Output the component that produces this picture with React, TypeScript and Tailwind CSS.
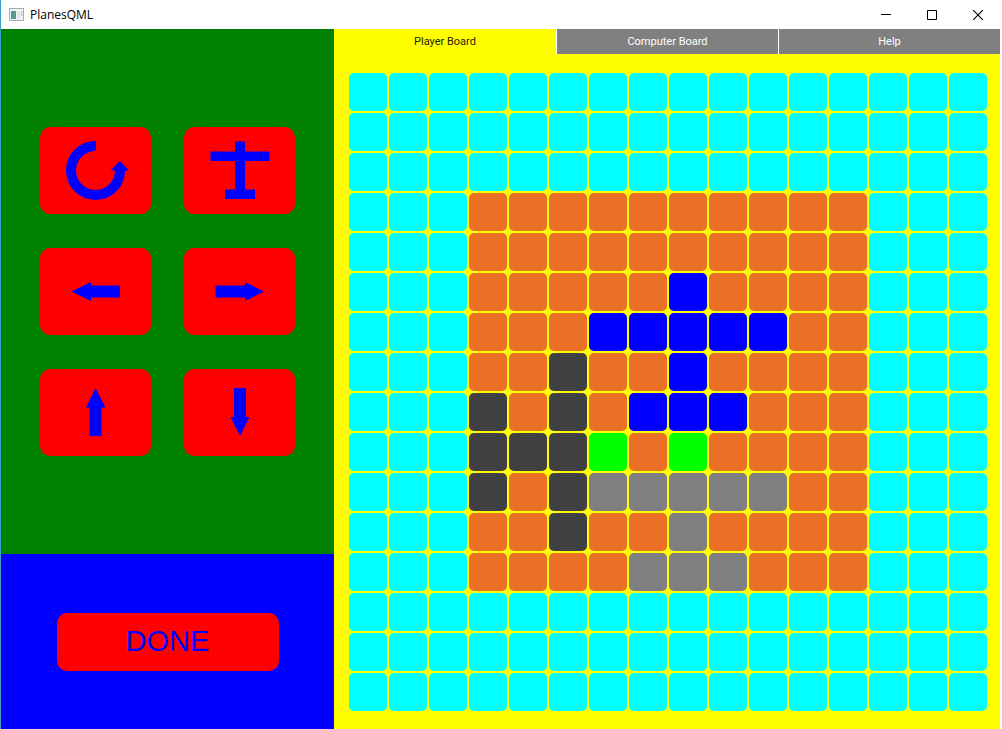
import { useState, type ReactNode } from "react";

const BOARD = [
  "................",
  "................",
  "................",
  "...oooooooooo...",
  "...oooooooooo...",
  "...oooooboooo...",
  "...ooobbbbboo...",
  "...ookooboooo...",
  "...kokobbbooo...",
  "...kkkgogoooo...",
  "...kokaaaaaoo...",
  "...ookooaoooo...",
  "...ooooaaaooo...",
  "................",
  "................",
  "................",
];

const CELL_COLORS: Record<string, string> = {
  ".": "bg-[#00ffff]",
  o: "bg-[#ea7025]",
  b: "bg-[#0000ff]",
  k: "bg-[#404040]",
  g: "bg-[#00ff00]",
  a: "bg-[#808080]",
};

const TABS = ["Player Board", "Computer Board", "Help"];

function Glyph({ children }: { children: ReactNode }) {
  return (
    <svg viewBox="0 0 111 87" className="h-[87px] w-[111px]" fill="#0000ff" aria-hidden="true">
      {children}
    </svg>
  );
}

const CONTROLS: { label: string; glyph: ReactNode }[] = [
  {
    label: "Rotate",
    glyph: (
      <>
        <path d="M56 19A24.500 24.500 0 1 0 80 43" fill="none" stroke="#0000ff" strokeWidth="10" />
        <path d="M70.500 43.500L80 34L89 43.500Z" />
      </>
    ),
  },
  { label: "Plane", glyph: <path d="M51 14.500h10v10h24.500v9.500H61v28.500h10v9.500H41v-9.500h10V34H26.500v-9.500H51Z" /> },
  { label: "Move left", glyph: <path d="M31.500 43.500L51 34v3.500h29v12H51V53Z" /> },
  { label: "Move right", glyph: <path d="M80 43.500L61 34v3.500H31.500v12H61V53Z" /> },
  { label: "Move up", glyph: <path d="M55.500 19L65.500 38.500H61.500v28.500h-12V38.500H46Z" /> },
  { label: "Move down", glyph: <path d="M56 67L65.500 48H62V19H50V48H46.500Z" /> },
];

function TitleBar() {
  return (
    <header className="-mr-px flex h-[29px] shrink-0 items-center bg-white text-black">
      <svg viewBox="0 0 15 13" className="ml-2 h-[13px] w-[15px]" aria-hidden="true">
        <defs>
          <linearGradient id="pane" x1="0" y1="0" x2="1" y2="1">
            <stop offset="0" stopColor="#4f8fb0" />
            <stop offset="1" stopColor="#58a878" />
          </linearGradient>
        </defs>
        <path d="M0 0h15v13H0Z" fill="#a9adb2" />
        <path d="M1 1h13v11H1Z" fill="#f4f4f4" />
        <path d="M2 3h5v8H2Z" fill="url(#pane)" />
        <path d="M8 3h3v8H8Z" fill="#e3e6e8" />
        <path d="M12 3h1.500v5H12Z" fill="#c8ccd0" />
      </svg>
      <h1 className="ml-1.5 flex-1 font-['Open_Sans','Noto_Sans',sans-serif] text-xs">PlanesQML</h1>
      <div className="flex h-full">
        <button type="button" aria-label="Minimize" className="grid w-[46px] place-items-center">
          <svg viewBox="0 0 10 10" className="size-[10px]" aria-hidden="true">
            <path d="M0 4h10v1H0Z" />
          </svg>
        </button>
        <button type="button" aria-label="Maximize" className="grid w-[46px] place-items-center">
          <svg viewBox="0 0 10 10" className="size-[10px]" fill="none" stroke="#000" aria-hidden="true">
            <path d="M.5.5h9v9h-9Z" />
          </svg>
        </button>
        <button type="button" aria-label="Close" className="grid w-[46px] place-items-center">
          <svg viewBox="0 0 10 10" className="size-[10px]" fill="none" stroke="#000" strokeWidth="1.100" aria-hidden="true">
            <path d="M0 0l10 10M10 0L0 10" />
          </svg>
        </button>
      </div>
    </header>
  );
}

export default function App() {
  const [active, setActive] = useState(0);

  return (
    <div className="flex min-h-screen flex-col border-l border-[#3aa0c8] bg-white pr-0.5 font-[Roboto,'Liberation_Sans',sans-serif]">
      <TitleBar />
      <main className="grid flex-1 grid-cols-[1fr_2fr]">
        <aside className="grid grid-rows-[3fr_1fr]">
          <section className="grid place-items-center bg-[#008000]" aria-label="Plane controls">
            <div className="grid grid-cols-2 gap-x-[33px] gap-y-[34px]">
              {CONTROLS.map(({ label, glyph }) => (
                <button key={label} type="button" aria-label={label} className="rounded-[10px] bg-[#ff0000]">
                  <Glyph>{glyph}</Glyph>
                </button>
              ))}
            </div>
          </section>
          <section className="grid place-items-center bg-[#0000ff]">
            <button
              type="button"
              className="h-[58px] w-2/3 rounded-[10px] bg-[#ff0000] font-['Liberation_Sans',sans-serif] text-[29px] text-[#0000ff]"
            >
              DONE
            </button>
          </section>
        </aside>
        <section className="flex flex-col bg-[#ffff00]">
          <div role="tablist" className="grid h-[25px] grid-cols-3 text-[11px]">
            {TABS.map((tab, i) => (
              <button
                key={tab}
                type="button"
                role="tab"
                aria-selected={i === active}
                onClick={() => setActive(i)}
                className={
                  i === active
                    ? "bg-[#ffff00] pt-px text-[#222200]"
                    : "border-l border-white bg-[#808080] pt-px text-white"
                }
              >
                {tab}
              </button>
            ))}
          </div>
          <div role="tabpanel" aria-label={TABS[active]} className="grid flex-1 place-items-center pl-0.5">
            <div className="grid grid-cols-16 gap-0.5">
              {BOARD.flatMap((row, y) =>
                row.split("").map((cell, x) => (
                  <div key={`${x}-${y}`} className={`size-[38px] rounded-[5px] ${CELL_COLORS[cell]}`} />
                )),
              )}
            </div>
          </div>
        </section>
      </main>
    </div>
  );
}
